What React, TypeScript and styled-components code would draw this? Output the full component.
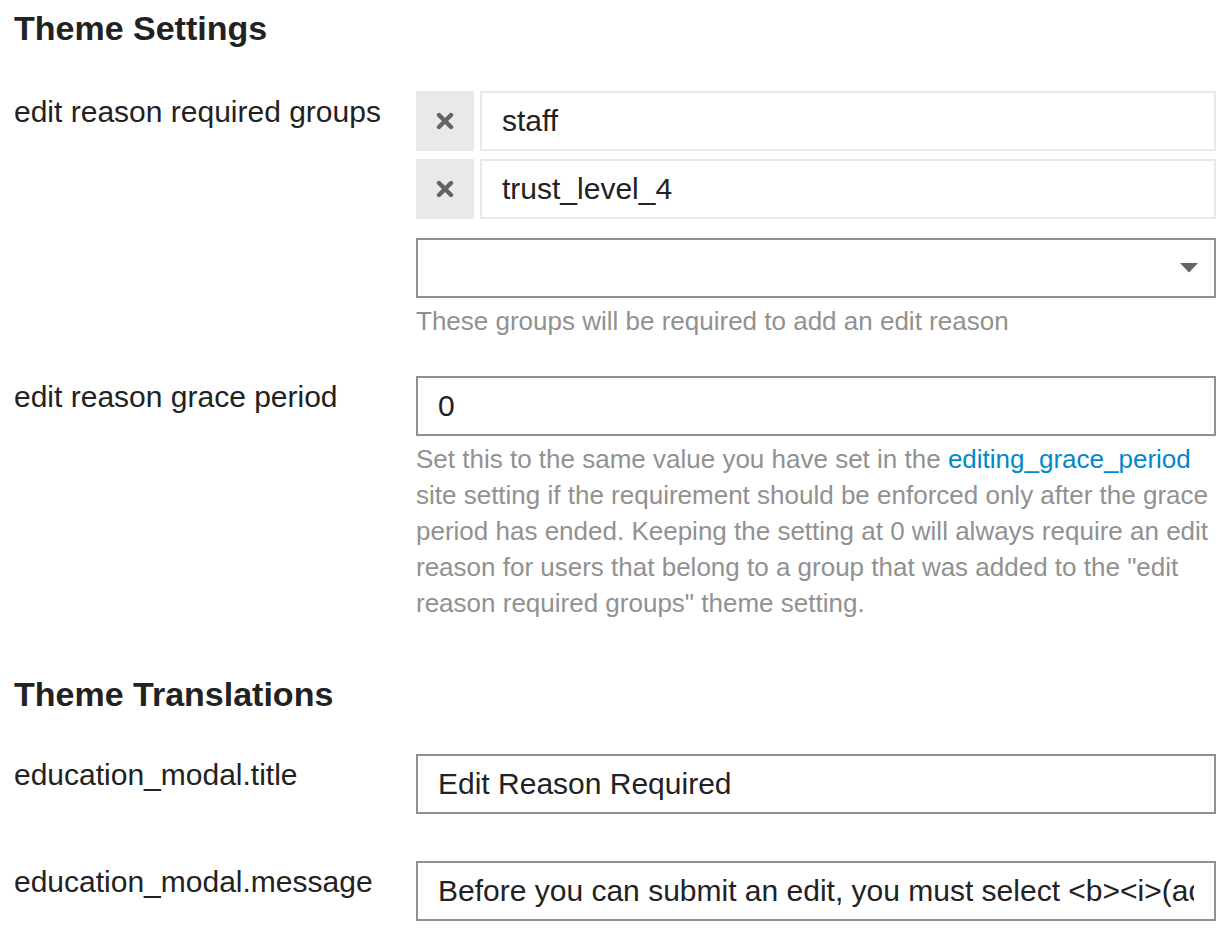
import styled, { createGlobalStyle } from "styled-components";

const GlobalStyle = createGlobalStyle`
  body {
    margin: 0;
    background: #fff;
    color: #222;
    font-family: "Liberation Sans", Arial, Helvetica, sans-serif;
  }
`;

const Page = styled.div`
  padding: 8px 12px 0 14px;
`;

const SectionTitle = styled.h3<{ $top: number; $bottom: number }>`
  margin: ${(p) => p.$top}px 0 ${(p) => p.$bottom}px;
  font-size: 34px;
  line-height: 40px;
  font-weight: bold;
  color: #222;
`;

const SettingRow = styled.div<{ $bottom: number }>`
  display: flex;
  align-items: flex-start;
  margin-bottom: ${(p) => p.$bottom}px;
`;

const Label = styled.div`
  width: 402px;
  flex-shrink: 0;
  padding-top: 3px;
  font-size: 30px;
  line-height: 36px;
`;

const Controls = styled.div`
  width: 800px;
  display: flex;
  flex-direction: column;
`;

const ChipList = styled.div`
  display: flex;
  flex-direction: column;
  gap: 8px;
`;

const Chip = styled.div`
  display: flex;
  gap: 6px;
  height: 60px;
`;

const RemoveButton = styled.button`
  width: 58px;
  height: 60px;
  padding: 0;
  border: 0;
  background: #e9e9e9;
  display: flex;
  align-items: center;
  justify-content: center;
  cursor: pointer;
`;

const ChipValue = styled.div`
  flex: 1;
  box-sizing: border-box;
  border: 2px solid #e9e9e9;
  padding: 0 20px;
  display: flex;
  align-items: center;
  font-size: 30px;
`;

const SelectBox = styled.div`
  margin-top: 19px;
  height: 60px;
  box-sizing: border-box;
  border: 2px solid #919191;
  display: flex;
  align-items: center;
  justify-content: flex-end;
  padding-right: 16px;
  background: #fff;
`;

const TextInput = styled.input`
  display: block;
  width: 100%;
  height: 60px;
  box-sizing: border-box;
  margin: 0;
  border: 2px solid #919191;
  border-radius: 0;
  padding: 0 20px;
  font-family: "Liberation Sans", Arial, Helvetica, sans-serif;
  font-size: 30px;
  color: #222;
  background: #fff;
  outline: none;
`;

const Help = styled.div<{ $top: number }>`
  margin-top: ${(p) => p.$top}px;
  font-size: 26px;
  line-height: 36px;
  color: #919191;
`;

const Link = styled.a`
  color: #0088cc;
  text-decoration: none;
`;

const CloseIcon = () => (
  <svg width="18" height="18" viewBox="0 0 18 18">
    <path d="M3 3 L15 15 M15 3 L3 15" stroke="#646464" strokeWidth="4.4" strokeLinecap="round" />
  </svg>
);

const Caret = () => (
  <svg width="18" height="10" viewBox="0 0 18 10">
    <path d="M0 0 H18 L9 9.5 Z" fill="#646464" />
  </svg>
);

const groups = ["staff", "trust_level_4"];

export default function App() {
  return (
    <Page>
      <GlobalStyle />
      <SectionTitle $top={0} $bottom={43}>Theme Settings</SectionTitle>

      <SettingRow $bottom={37}>
        <Label>edit reason required groups</Label>
        <Controls>
          <ChipList>
            {groups.map((g) => (
              <Chip key={g}>
                <RemoveButton aria-label={`remove ${g}`}>
                  <CloseIcon />
                </RemoveButton>
                <ChipValue>{g}</ChipValue>
              </Chip>
            ))}
          </ChipList>
          <SelectBox>
            <Caret />
          </SelectBox>
          <Help $top={5}>These groups will be required to add an edit reason</Help>
        </Controls>
      </SettingRow>

      <SettingRow $bottom={0}>
        <Label>edit reason grace period</Label>
        <Controls>
          <TextInput readOnly defaultValue="0" />
          <Help $top={5}>
            Set this to the same value you have set in the{" "}
            <Link href="#">editing_grace_period</Link> site setting if the requirement
            should be enforced only after the grace period has ended. Keeping the setting
            at 0 will always require an edit reason for users that belong to a group that
            was added to the "edit reason required groups" theme setting.
          </Help>
        </Controls>
      </SettingRow>

      <SectionTitle $top={53} $bottom={40}>Theme Translations</SectionTitle>

      <SettingRow $bottom={47}>
        <Label>education_modal.title</Label>
        <Controls>
          <TextInput readOnly defaultValue="Edit Reason Required" />
        </Controls>
      </SettingRow>

      <SettingRow $bottom={0}>
        <Label>education_modal.message</Label>
        <Controls>
          <TextInput
            readOnly
            defaultValue="Before you can submit an edit, you must select <b><i>(add an edit reason)</i></b> to explain why the post was changed."
          />
        </Controls>
      </SettingRow>
    </Page>
  );
}
